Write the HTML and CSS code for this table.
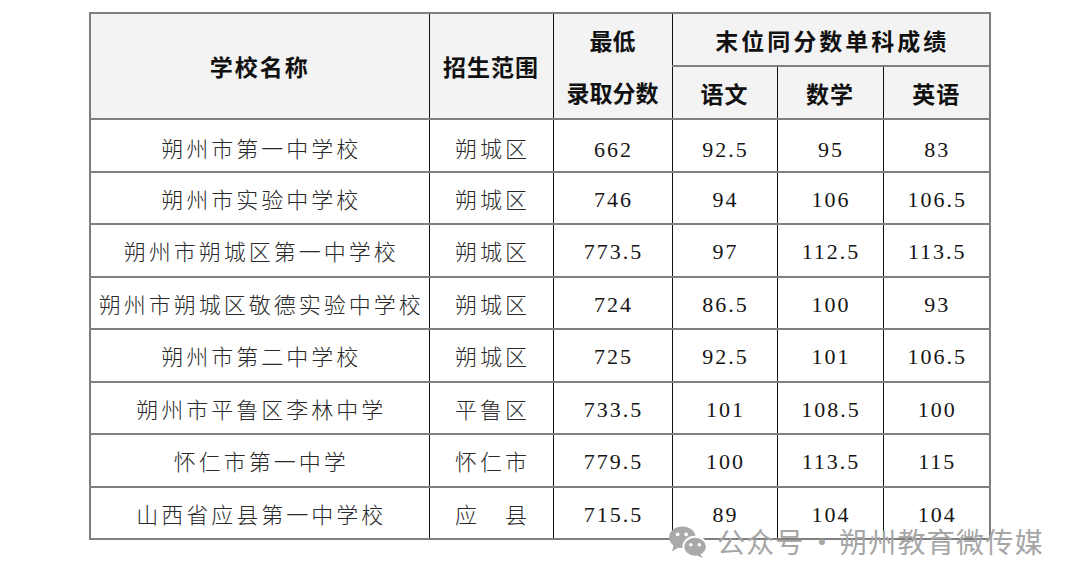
FILE: index.html
```html
<!DOCTYPE html>
<html lang="zh-CN">
<head>
<meta charset="utf-8">
<title>录取分数</title>
<link rel="stylesheet" href="styles.css">
</head>
<body>
<div class="page">
  <table class="score">
    <colgroup>
      <col class="c-name"><col class="c-area"><col class="c-min"><col class="c-sub"><col class="c-sub2"><col class="c-sub3">
    </colgroup>
    <thead>
      <tr class="h1">
        <th rowspan="2" class="sp2">学校名称</th>
        <th rowspan="2" class="sp1">招生范围</th>
        <th rowspan="2" class="two"><span class="ln">最低</span><span class="ln">录取分数</span></th>
        <th colspan="3" class="sp3">末位同分数单科成绩</th>
      </tr>
      <tr class="h2">
        <th class="sp1">语文</th>
        <th class="sp1">数学</th>
        <th class="sp1">英语</th>
      </tr>
    </thead>
    <tbody>
      <tr class="first"><td class="cn">朔州市第一中学校</td><td class="cn">朔城区</td><td>662</td><td>92.5</td><td>95</td><td>83</td></tr>
      <tr><td class="cn">朔州市实验中学校</td><td class="cn">朔城区</td><td>746</td><td>94</td><td>106</td><td>106.5</td></tr>
      <tr><td class="cn">朔州市朔城区第一中学校</td><td class="cn">朔城区</td><td>773.5</td><td>97</td><td>112.5</td><td>113.5</td></tr>
      <tr><td class="cn">朔州市朔城区敬德实验中学校</td><td class="cn">朔城区</td><td>724</td><td>86.5</td><td>100</td><td>93</td></tr>
      <tr><td class="cn">朔州市第二中学校</td><td class="cn">朔城区</td><td>725</td><td>92.5</td><td>101</td><td>106.5</td></tr>
      <tr><td class="cn">朔州市平鲁区李林中学</td><td class="cn">平鲁区</td><td>733.5</td><td>101</td><td>108.5</td><td>100</td></tr>
      <tr><td class="cn">怀仁市第一中学</td><td class="cn">怀仁市</td><td>779.5</td><td>100</td><td>113.5</td><td>115</td></tr>
      <tr><td class="cn">山西省应县第一中学校</td><td class="cn">应　县</td><td>715.5</td><td>89</td><td>104</td><td>104</td></tr>
    </tbody>
  </table>

  <div class="mark">
    <svg class="wx" width="40" height="33" viewBox="0 0 42 35">
      <ellipse cx="15" cy="13" rx="14" ry="11.5" fill="#a9a9a9"/>
      <path d="M6 21 L4 28 L12 23 Z" fill="#a9a9a9"/>
      <circle cx="10" cy="10" r="2" fill="#fff"/>
      <circle cx="19" cy="10" r="2" fill="#fff"/>
      <ellipse cx="28.5" cy="23" rx="12.5" ry="10.5" stroke="#fff" stroke-width="2" fill="#a9a9a9"/>
      <path d="M34 31 L37 35 L30 32 Z" fill="#a9a9a9"/>
      <circle cx="24" cy="21" r="1.8" fill="#fff"/>
      <circle cx="33" cy="21" r="1.8" fill="#fff"/>
    </svg>
    <span class="mtext">公众号<span class="dot">·</span>朔州教育微传媒</span>
  </div>
</div>
</body>
</html>
```

FILE: styles.css
```css
html, body {
  margin: 0;
  padding: 0;
  background: #ffffff;
}

.page {
  position: relative;
  width: 1080px;
  height: 584px;
  padding: 12px 0 0 89px;
  box-sizing: border-box;
}

.score {
  border-collapse: collapse;
  table-layout: fixed;
  width: 902px;
  border: 2px solid #7c7c7c;
  font-family: "Liberation Serif", "Noto Sans CJK SC", serif;
  color: #151515;
}

.c-name { width: 339px; }
.c-area { width: 124px; }
.c-min  { width: 119px; }
.c-sub  { width: 105px; }
.c-sub2 { width: 106px; }
.c-sub3 { width: 107px; }

.score th,
.score td {
  padding: 0;
  text-align: center;
  vertical-align: middle;
  border-left: 1px solid #111;
  border-right: 1px solid #111;
  border-top: 2px solid #808080;
  border-bottom: 2px solid #808080;
}

.score thead th {
  background: #f3f3f3;
  font-family: "Noto Sans CJK SC", sans-serif;
  font-weight: 700;
  font-size: 23px;
  color: #111;
  height: 51px;
}

.score thead tr.h1 th.sp2 { letter-spacing: 2px; }
.score thead th.sp1 { letter-spacing: 1px; }
.score thead th.sp3 { letter-spacing: 3px; padding-left: 3px; }

.two .ln {
  display: block;
  line-height: 52px;
}

.score tbody tr.first td {
  border-top: none;
}

.score tbody td {
  height: 46.5px;
  font-size: 22px;
  line-height: 20px;
  letter-spacing: 2px;
  padding-top: 4px;
  padding-left: 2px;
}

.score tbody td.cn {
  font-family: "Noto Sans CJK SC", sans-serif;
  font-weight: 300;
  font-size: 22px;
  line-height: 28px;
  letter-spacing: 3px;
  color: #2a2a2a;
  padding-top: 0;
  padding-left: 3px;
  height: 50.5px;
}

.score tbody tr.first td {
  padding-top: 10px;
  height: 40.5px;
}

.score tbody tr.first td.cn {
  padding-top: 3px;
  height: 47.5px;
}

.mark {
  position: absolute;
  left: 668px;
  top: 526px;
  height: 30px;
  display: flex;
  align-items: center;
  gap: 9px;
}

.wx {
  display: block;
  margin-top: 1px;
}

.mtext {
  font-family: "Noto Sans CJK SC", sans-serif;
  font-size: 28px;
  line-height: 30px;
  color: #a6a6a6;
  letter-spacing: 1.3px;
  white-space: nowrap;
}

.dot {
  display: inline-block;
  width: 34px;
  text-align: center;
  letter-spacing: 0;
}
```
